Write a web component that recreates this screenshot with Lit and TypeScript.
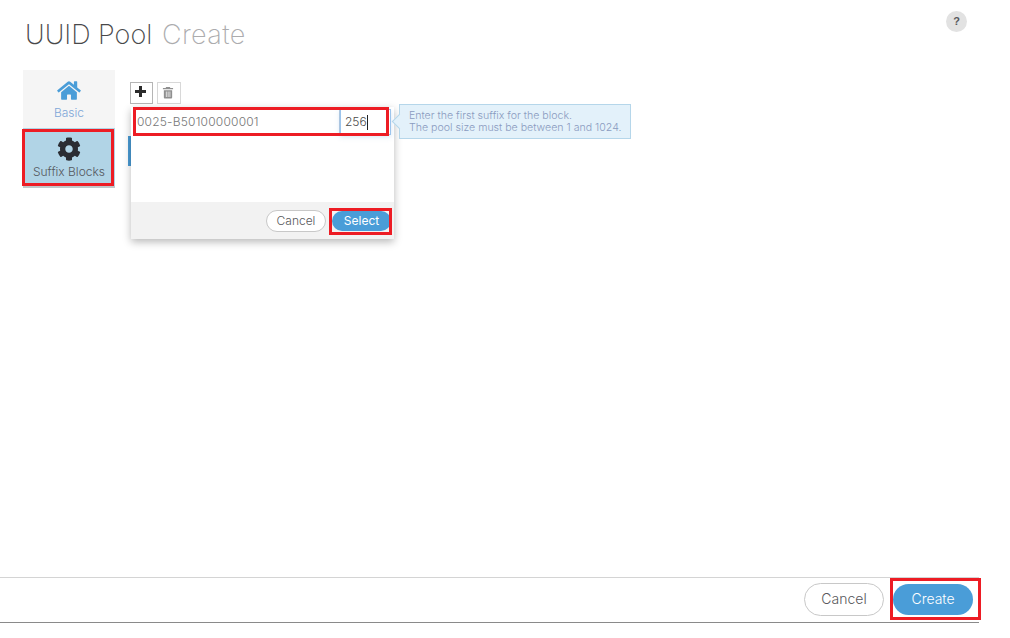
import { LitElement, html, css } from "lit";
import { customElement } from "lit/decorators.js";

@customElement("app-root")
export class AppRoot extends LitElement {
  static styles = css`
    :host { display: flex; flex-direction: column; width: 1010px; height: 638px; background: #fff; font-family: Inter, "Liberation Sans", sans-serif; font-weight: 300; color: #58585b; overflow: hidden; position: relative; box-sizing: border-box; }
    * { box-sizing: border-box; }
    .mark { position: relative; }
    .mark::after { content: ""; position: absolute; box-sizing: border-box; border: 3px solid #ed1c24; pointer-events: none; }
    .header { display: flex; justify-content: space-between; height: 70px; padding: 11px 43px 0 25px; }
    h1 { margin: 6px 0 0; font-size: 27px; line-height: 36px; font-weight: 200; color: #48484a; letter-spacing: 0; }
    h1 span { color: #acacae; margin-left: 2px; letter-spacing: 0.4px; }
    .help { width: 21px; height: 21px; border-radius: 50%; background: #e2e2e2; color: #58585b; font: 700 11px/21px "Liberation Sans", sans-serif; text-align: center; }
    .body { flex: 1; display: flex; padding-left: 23px; }
    .side { width: 92px; display: flex; flex-direction: column; }
    .tab { display: flex; flex-direction: column; align-items: center; background: #f5f5f5; height: 58px; padding-top: 10px; font-size: 12px; color: #7ea6d8; }
    .tab svg { display: block; width: 24px; height: 21px; fill: #4a9dd8; margin-bottom: 4px; }
    .tab.on { height: 60px; padding-top: 9px; background: #b1d4e6; color: #55585e; border-bottom: 2px solid #c2c6c9; }
    .tab.on svg { fill: #2b2d33; height: 24px; margin-bottom: 3px; margin-left: -1px; }
    .mark.tabm::after { left: -1px; top: 1px; width: 92px; height: 57px; }
    .content { position: relative; flex: 1; padding: 12px 0 0 15px; }
    .tools { display: flex; gap: 4px; }
    .tool { width: 23px; height: 22px; border: 1px solid #b5b5b5; display: flex; align-items: center; justify-content: center; background: #fff; }
    .tool.off { width: 24px; border-color: #d8d8d8; }
    .tool svg { width: 13px; height: 13px; fill: #2b2b2b; margin: -4px 2px 0 0; }
    .tool.off svg { width: 12px; fill: #8f8f8f; margin: -2px 2px 0 0; }
    .bar { width: 3px; height: 30px; background: #4a9bd4; margin: 32px 0 0 -2px; }
    .pop { position: absolute; left: 16px; top: 37px; width: 263px; height: 132px; background: #fff; box-shadow: 0 3px 8px rgba(0,0,0,.28); display: flex; flex-direction: column; }
    .row { display: flex; height: 28px; padding: 2px 3px 0 4px; }
    .row.mark::after { left: 2px; top: 0; width: 256px; height: 29px; }
    .uuid { width: 205px; height: 24px; margin-top: 1px; padding: 0 2px; font-size: 12px; line-height: 24px; color: #777; letter-spacing: 0.2px; border-right: 1px solid #b4cbe2; }
    .size { width: 51px; height: 26px; padding-left: 4px; font-size: 12px; line-height: 26px; color: #4a4a4a; border: 1px solid #9cc4ec; display: flex; align-items: center; box-shadow: 0 2px 5px rgba(120,170,220,.3); }
    .caret { display: inline-block; width: 1px; height: 15px; background: #222; }
    .spacer { flex: 1; }
    .foot { height: 37px; background: #f2f2f2; display: flex; justify-content: flex-end; align-items: center; gap: 6px; padding: 0 3px 0 0; }
    .btn { display: flex; align-items: center; justify-content: center; border-radius: 12px; font-size: 12px; }
    .btn.ghost { width: 60px; height: 22px; background: #fff; border: 1px solid #c8c8c8; color: #58585b; }
    .btn.primary { width: 59px; height: 20px; background: #4a9dd8; color: #fff; font-weight: 400; }
    .selm::after { left: -3px; top: -3px; width: 63px; height: 27px; }
    .tip { position: absolute; left: 284px; top: 34px; width: 232px; height: 35px; background: #e3f1fa; border: 1px solid #b5d6ea; padding: 5px 9px 0; font-size: 10.6px; line-height: 12px; color: #8a9bc0; white-space: nowrap; }
    .tip::before { content: ""; position: absolute; left: -6px; top: 11px; width: 10px; height: 10px; background: #e3f1fa; border-left: 1px solid #b5d6ea; border-bottom: 1px solid #b5d6ea; transform: rotate(45deg); }
    .footer { margin: 0 31px 15px 0; height: 46px; border-top: 1px solid #d4d4d4; border-bottom: 1px solid #8a8a8a; display: flex; justify-content: flex-end; align-items: center; gap: 9px; padding: 0 6px 1px 0; }
    .footer .btn { width: 80px; border-radius: 17px; font-size: 14px; padding-bottom: 2px; }
    .footer .ghost { height: 33px; }
    .footer .primary { height: 31px; font-weight: 300; }
    .crem::after { left: -3px; top: -6px; width: 91px; height: 42px; }
  `;

  render() {
    return html`
      <div class="header">
        <h1>UUID Pool <span>Create</span></h1>
        <div class="help">?</div>
      </div>
      <div class="body">
        <div class="side">
          <div class="tab">
            <svg viewBox="0 0 576 512"><path d="M280.37 148.26L96 300.11V464a16 16 0 0 0 16 16l112.06-.29a16 16 0 0 0 15.92-16V368a16 16 0 0 1 16-16h64a16 16 0 0 1 16 16v95.64a16 16 0 0 0 16 16.05L464 480a16 16 0 0 0 16-16V300L295.67 148.26a12.19 12.19 0 0 0-15.3 0zM571.6 251.47L488 182.56V44.05a12 12 0 0 0-12-12h-56a12 12 0 0 0-12 12v72.61L318.47 43a48 48 0 0 0-61 0L4.34 251.47a12 12 0 0 0-1.6 16.9l25.5 31A12 12 0 0 0 45.15 301l235.22-193.74a12.19 12.19 0 0 1 15.3 0L530.9 301a12 12 0 0 0 16.9-1.6l25.5-31a12 12 0 0 0-1.7-16.93z"/></svg>
            Basic
          </div>
          <div class="tab on mark tabm">
            <svg viewBox="0 0 512 512"><path d="M487.4 315.7l-42.6-24.6c4.3-23.2 4.3-47 0-70.2l42.6-24.6c4.9-2.8 7.1-8.6 5.5-14-11.1-35.6-30-67.8-54.7-94.6-3.8-4.1-10-5.1-14.8-2.3L380.8 110c-17.9-15.4-38.5-27.3-60.8-35.1V25.8c0-5.6-3.9-10.5-9.4-11.7-36.7-8.2-74.3-7.8-109.2 0-5.5 1.2-9.4 6.1-9.4 11.7V75c-22.2 7.9-42.8 19.8-60.8 35.1L88.7 85.5c-4.9-2.8-11-1.9-14.8 2.3-24.7 26.7-43.6 58.9-54.7 94.6-1.7 5.4.6 11.2 5.5 14L67.3 221c-4.3 23.2-4.3 47 0 70.2l-42.6 24.6c-4.9 2.8-7.1 8.6-5.5 14 11.1 35.6 30 67.8 54.7 94.6 3.8 4.1 10 5.1 14.8 2.3l42.6-24.6c17.9 15.4 38.5 27.3 60.8 35.1v49.2c0 5.6 3.9 10.5 9.4 11.7 36.7 8.2 74.3 7.8 109.2 0 5.5-1.2 9.4-6.1 9.4-11.7v-49.2c22.2-7.9 42.8-19.8 60.8-35.1l42.6 24.6c4.9 2.8 11 1.9 14.8-2.3 24.7-26.7 43.6-58.9 54.7-94.6 1.5-5.5-.7-11.3-5.6-14.1zM256 336c-44.1 0-80-35.9-80-80s35.9-80 80-80 80 35.9 80 80-35.9 80-80 80z"/></svg>
            Suffix Blocks
          </div>
        </div>
        <div class="content">
          <div class="tools">
            <div class="tool"><svg viewBox="0 0 13 13"><path d="M5 1h3v4h4v3H8v4H5V8H1V5h4z"/></svg></div>
            <div class="tool off"><svg viewBox="0 0 13 13"><path fill-rule="evenodd" d="M4.5 0.5h4l.6 1.2H12v1.3H1V1.7h2.9zM2 4h9v8a1 1 0 0 1-1 1H3a1 1 0 0 1-1-1zm2.2 1.5v6h.8v-6zm2 0v6h.8v-6zm2 0v6h.8v-6z"/></svg></div>
          </div>
          <div class="bar"></div>
          <div class="pop">
            <div class="row mark">
              <div class="uuid">0025-B50100000001</div>
              <div class="size">256<span class="caret"></span></div>
            </div>
            <div class="spacer"></div>
            <div class="foot">
              <div class="btn ghost">Cancel</div>
              <div class="btn primary mark selm">Select</div>
            </div>
          </div>
          <div class="tip">Enter the first suffix for the block.<br />The pool size must be between 1 and 1024.</div>
        </div>
      </div>
      <div class="footer">
        <div class="btn ghost">Cancel</div>
        <div class="btn primary mark crem">Create</div>
      </div>
    `;
  }
}
